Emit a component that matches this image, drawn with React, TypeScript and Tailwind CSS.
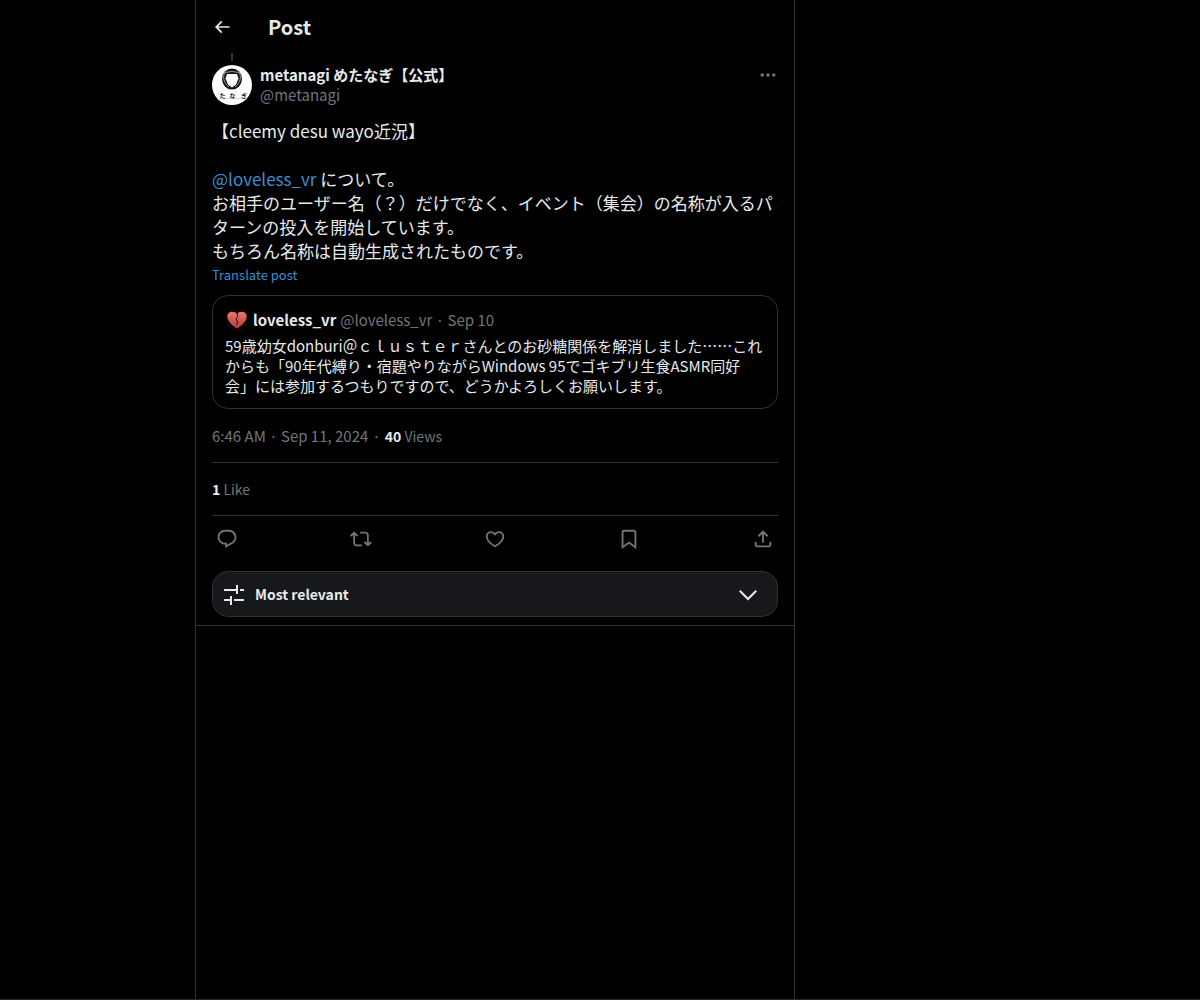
import React from "react";

type IconProps = { d: string; className: string };

function Icon({ d, className }: IconProps) {
  return (
    <svg viewBox="0 0 24 24" aria-hidden="true" fill="currentColor" className={className}>
      <path d={d} />
    </svg>
  );
}

const BACK = "M7.414 13l5.043 5.04-1.414 1.42L3.586 12l7.457-7.46 1.414 1.42L7.414 11H21v2H7.414z";
const MORE =
  "M3 12c0-1.1.9-2 2-2s2 .9 2 2-.9 2-2 2-2-.9-2-2zm9 2c1.1 0 2-.9 2-2s-.9-2-2-2-2 .9-2 2 .9 2 2 2zm7 0c1.1 0 2-.9 2-2s-.9-2-2-2-2 .9-2 2 .9 2 2 2z";
const CHEVRON = "M3 9.5l1.5-1.5L12 15.5l7.5-7.5L21 9.5 12 18.5z";
const TUNE = "M2 7h12V3h2v9h-2V9H2zM18 7h4v2h-4zM2 17h6v-3h2v9H8v-4H2zM12 17h10v2H12z";

const ACTIONS = [
  {
    label: "Reply",
    d: "M1.751 10c0-4.42 3.584-8 8.005-8h4.366c4.49 0 8.129 3.64 8.129 8.13 0 2.96-1.607 5.68-4.196 7.11l-8.054 4.46v-3.69h-.067c-4.49.1-8.183-3.51-8.183-8.01zm8.005-6c-3.317 0-6.005 2.69-6.005 6 0 3.37 2.77 6.08 6.138 6.01l.351-.01h1.761v2.3l5.087-2.81c1.951-1.08 3.163-3.13 3.163-5.36 0-3.39-2.744-6.13-6.129-6.13H9.756z",
  },
  {
    label: "Repost",
    d: "M4.5 3.88l4.432 4.14-1.364 1.46L5.5 7.55V16c0 1.1.896 2 2 2H13v2H7.5c-2.209 0-4-1.79-4-4V7.55L1.432 9.48.068 8.02 4.5 3.88zM16.5 6H11V4h5.5c2.209 0 4 1.79 4 4v8.45l2.068-1.93 1.364 1.46-4.432 4.14-4.432-4.14 1.364-1.46 2.068 1.93V8c0-1.1-.896-2-2-2z",
  },
  {
    label: "Like",
    d: "M16.697 5.5c-1.222-.06-2.679.51-3.89 2.16l-.805 1.09-.806-1.09C9.984 6.01 8.526 5.44 7.304 5.5c-1.243.07-2.349.78-2.91 1.91-.552 1.12-.633 2.78.479 4.82 1.074 1.97 3.257 4.27 7.129 6.61 3.87-2.34 6.052-4.64 7.126-6.61 1.111-2.04 1.03-3.7.477-4.82-.561-1.13-1.666-1.84-2.908-1.91zm4.187 7.69c-1.351 2.48-4.001 5.12-8.379 7.67l-.503.3-.504-.3c-4.379-2.55-7.029-5.19-8.382-7.67-1.36-2.5-1.41-4.86-.514-6.67.887-1.79 2.647-2.91 4.601-3.01 1.651-.09 3.368.56 4.798 2.01 1.429-1.45 3.146-2.1 4.796-2.01 1.954.1 3.714 1.22 4.601 3.01.896 1.81.846 4.17-.514 6.67z",
  },
  {
    label: "Bookmark",
    d: "M4 4.5C4 3.12 5.119 2 6.5 2h11C18.881 2 20 3.12 20 4.5v18.44l-8-5.71-8 5.71V4.5zM6.5 4c-.276 0-.5.22-.5.5v14.56l6-4.29 6 4.29V4.5c0-.28-.224-.5-.5-.5h-11z",
  },
  {
    label: "Share",
    d: "M12 2.59l5.7 5.7-1.41 1.42L13 6.41V16h-2V6.41l-3.3 3.3-1.41-1.42L12 2.59zM21 15l-.02 3.51c0 1.38-1.12 2.49-2.5 2.49H5.5C4.11 21 3 19.88 3 18.5V15h2v3.5c0 .28.22.5.5.5h12.98c.28 0 .5-.22.5-.5L19 15h2z",
  },
];

function Avatar() {
  return (
    <svg viewBox="0 0 40 40" role="img" aria-label="metanagi" className="size-10 shrink-0 rounded-full bg-white">
      <ellipse cx="20" cy="14" rx="10" ry="10.5" fill="#151515" />
      <path d="M15 9h10l1.500 4.500-2.500 6-4 3-4-3-2.500-6z" fill="#fff" />
      <path
        d="M12.500 7.500q7.500-2 15 0M13 7.500c-3 5-1 10 4 14.500M27 7.500c3 5 1 10-4 14.500"
        fill="none"
        stroke="#bbb"
        strokeWidth=".8"
      />
      <text x="7.500" y="33" fontSize="6" fontWeight="700" fill="#111">た</text>
      <text x="17.500" y="33" fontSize="6" fontWeight="700" fill="#111">な</text>
      <text x="29" y="33" fontSize="6" fontWeight="700" fill="#111">ぎ</text>
      <path d="M13 33.500h18" stroke="#bbb" strokeWidth=".6" />
    </svg>
  );
}

function BrokenHeart() {
  return (
    <svg viewBox="0 0 24 24" role="img" aria-label="loveless_vr" className="size-6 shrink-0 rounded-full">
      <defs>
        <linearGradient id="heart" x1="0" y1="0" x2="0" y2="1">
          <stop offset="0" stopColor="#e8796c" />
          <stop offset="1" stopColor="#b23c36" />
        </linearGradient>
      </defs>
      <circle cx="12" cy="12" r="12" fill="#0d0307" />
      <path d="M12 20.500C8 18 2.300 13.500 2.300 8.500 2.300 3 9.300 2.500 12 6c2.700-3.500 9.700-3 9.700 2.500C21.700 13.500 16 18 12 20.500z" fill="url(#heart)" />
      <path d="M12 5l.8 3.500-1.800 2.500 1.800 3-1.300 3" fill="none" stroke="#3a080b" strokeWidth="1" />
    </svg>
  );
}

export default function App() {
  return (
    <div className="min-h-screen border-b border-[#2a2626] bg-black pl-[195px] font-['Noto_Sans_CJK_JP','Noto_Sans',sans-serif] text-[15px] leading-5 text-[#e7e9ea]">
      <main className="flex min-h-[calc(100vh-1px)] max-w-[600px] flex-col border-x border-[#2f3336]">
        <header className="flex h-[53px] items-center gap-9 px-4">
          <button type="button" aria-label="Back" className="flex size-5 items-center justify-center">
            <Icon d={BACK} className="size-5 shrink-0" />
          </button>
          <h1 className="text-xl leading-6 font-bold">Post</h1>
        </header>

        <article className="px-4">
          <div className="flex w-10 justify-center">
            <div className="mb-1 h-2 w-0.5 bg-[#333639]" />
          </div>
          <div className="flex gap-2">
            <Avatar />
            <div className="min-w-0 flex-1">
              <div className="font-bold">metanagi めたなぎ【公式】</div>
              <div className="text-[#71767b]">@metanagi</div>
            </div>
            <button type="button" aria-label="More" className="flex size-5 items-center justify-center text-[#71767b]">
              <Icon d={MORE} className="size-5 shrink-0" />
            </button>
          </div>

          <div className="mt-3.5 text-[17px] leading-6">
            <p>【cleemy desu wayo近況】</p>
            <br />
            <p>
              <a href="#loveless_vr" className="text-[#3e8ed0]">@loveless_vr</a> について。
            </p>
            <p>お相手のユーザー名（？）だけでなく、イベント（集会）の名称が入るパターンの投入を開始しています。</p>
            <p>もちろん名称は自動生成されたものです。</p>
          </div>
          <button type="button" className="mt-1 block text-[13px] leading-4 text-[#3e8ed0]">Translate post</button>

          <section className="mt-3 rounded-2xl border border-[#2f3336] p-3">
            <div className="flex items-center gap-1">
              <BrokenHeart />
              <span className="font-bold">loveless_vr</span>
              <span className="text-[#71767b]">@loveless_vr · Sep 10</span>
            </div>
            <p className="mt-1 [text-spacing-trim:space-all]">
              59歳幼女donburi＠ｃｌｕｓｔｅｒさんとのお砂糖関係を解消しました……これからも「90年代縛り・宿題やりながらWindows 95でゴキブリ生食ASMR同好会」には参加するつもりですので、どうかよろしくお願いします。
            </p>
          </section>

          <div className="flex gap-1 border-b border-[#2f3336] pt-[17px] pb-4 text-[#71767b]">
            <time>6:46 AM · Sep 11, 2024</time>
            <span>·</span>
            <span className="text-sm leading-5">
              <b className="text-[#e7e9ea]">40</b> Views
            </span>
          </div>
          <div className="border-b border-[#2f3336] py-4 text-sm leading-5 text-[#71767b]">
            <b className="text-[#e7e9ea]">1</b> Like
          </div>

          <div className="flex h-[46px] items-center justify-between text-[#71767b]">
            {ACTIONS.map((a) => (
              <button key={a.label} type="button" aria-label={a.label} className="flex w-[30px] justify-center">
                <Icon d={a.d} className="size-[22px]" />
              </button>
            ))}
          </div>

          <button type="button" className="mt-[9px] mb-2 flex h-[46px] w-full items-center rounded-2xl border border-[#2f3336] bg-[#16181c] pr-[17px] pl-[9px] text-sm font-bold">
            <Icon d={TUNE} className="size-6" />
            <span className="ml-[9px] flex-1 text-left">Most relevant</span>
            <Icon d={CHEVRON} className="size-6" />
          </button>
        </article>
        <hr className="border-[#2f3336]" />
      </main>
    </div>
  );
}
